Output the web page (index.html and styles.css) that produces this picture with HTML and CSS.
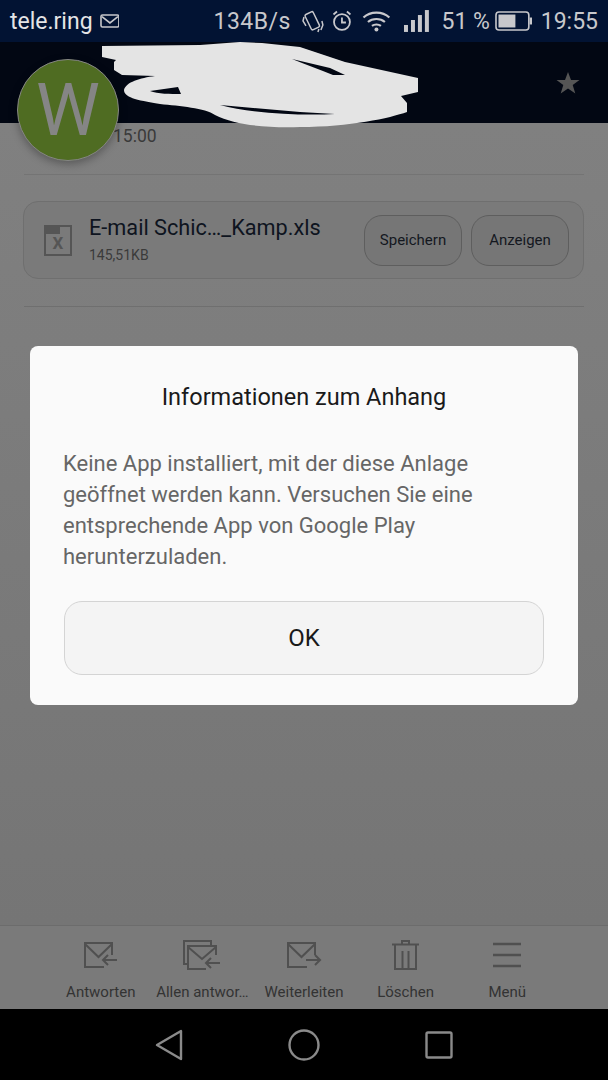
FILE: index.html
```html
<!DOCTYPE html>
<html lang="de">
<head>
	<meta charset="UTF-8">
	<meta name="viewport" content="width=device-width, initial-scale=1.0">
	<title>Informationen zum Anhang</title>
	<link rel="stylesheet" href="styles.css">
</head>
<body>
	<div class="phone">
		<div class="statusbar">
			<span class="carrier">tele.ring</span>
			<svg class="ic-mail" width="20" height="16" viewBox="0 0 20 16" fill="none" stroke="#c8c8cc" stroke-width="1.6"><rect x="1" y="2" width="18" height="12" rx="1.5"/><path d="M2 3.500l8 6.500 8-6.500"/></svg>
			<span class="speed">134B/s</span>
			<svg class="ic-vib" width="22" height="24" viewBox="0 0 22 24" fill="none" stroke="#c8c8cc" stroke-width="1.5"><rect x="6" y="3" width="9" height="17" rx="1.5" transform="rotate(-26 11 12)"/><path d="M2 8l-1 4 3 5M20 12l1 4-2 5M17 20l-1 3"/></svg>
			<svg class="ic-alarm" width="20" height="22" viewBox="0 0 20 22" fill="none" stroke="#c8c8cc" stroke-width="1.8"><circle cx="10" cy="12" r="8"/><path d="M10 7.500v5h4M1.500 4.500l3.500-3M18.500 4.500l-3.500-3"/></svg>
			<svg class="ic-wifi" width="29" height="22" viewBox="0 0 29 22" fill="none" stroke="#c8c8cc" stroke-width="2.200"><path d="M1.500 7.500c7-6.500 19-6.500 26 0M6 12c4.500-4 12.500-4 17 0M10 16c2.500-2 6.500-2 9 0"/><circle cx="14.500" cy="19.500" r="2" fill="#c8c8cc" stroke="none"/></svg>
			<svg class="ic-signal" width="25" height="22" viewBox="0 0 25 22" fill="#c8c8cc"><rect x="0" y="15" width="4" height="7"/><rect x="7" y="10" width="4" height="12"/><rect x="14" y="5" width="4" height="17"/><rect x="21" y="0" width="4" height="22"/></svg>
			<span class="pct">51 %</span>
			<svg class="ic-batt" width="38" height="20" viewBox="0 0 38 20" fill="none"><rect x="1" y="1" width="33" height="18" rx="3" stroke="#c8c8cc" stroke-width="1.600"/><rect x="3.500" y="3.500" width="17" height="13" fill="#c8c8cc"/><path d="M36 6.500v7" stroke="#c8c8cc" stroke-width="2.400"/></svg>
			<span class="clock">19:55</span>
		</div>

		<div class="titlebar">
			<svg class="star" width="24" height="24" viewBox="0 0 24 24" fill="#555"><path d="M12 1l3 8h8.500l-6.800 5 2.600 8.500L12 17.400l-7.300 5.100L7.300 14 .500 9H9z"/></svg>
		</div>

		<div class="content">
			<div class="daterow"><span>15:00</span></div>
			<div class="card">
				<svg class="ic-xls" width="28" height="31" viewBox="0 0 28 31" fill="none"><rect x="1" y="1" width="26" height="29" stroke="#555" stroke-width="2"/><rect x="2" y="2" width="14" height="7" fill="#555"/><text x="14" y="24" class="xls-x">X</text></svg>
				<div class="fileinfo">
					<div class="filename">E-mail Schic…_Kamp.xls</div>
					<div class="filesize">145,51KB</div>
				</div>
				<button class="cardbtn">Speichern</button>
				<button class="cardbtn">Anzeigen</button>
			</div>
			<div class="rule"></div>
		</div>

		<div class="toolbar">
			<div class="tool">
				<svg width="36" height="28" viewBox="0 0 36 28" fill="none" stroke="#505050" stroke-width="2"><path d="M29 14V2H2v24h19M2 3l13.500 13L29 3"/><path d="M34 19H20M25 14l-5 5 5 5"/></svg>
				<span>Antworten</span>
			</div>
			<div class="tool">
				<svg width="38" height="30" viewBox="0 0 38 30" fill="none" stroke="#505050" stroke-width="2"><path d="M5 24H1V1h27v4"/><path d="M33 15V6H5v23h18M5 7l14 12L33 7"/><path d="M37 23H23M28 18l-5 5 5 5"/></svg>
				<span>Allen antwor…</span>
			</div>
			<div class="tool">
				<svg width="36" height="28" viewBox="0 0 36 28" fill="none" stroke="#505050" stroke-width="2"><path d="M29 14V2H2v24h19M2 3l13.500 13L29 3"/><path d="M20 19h14M29 14l5 5-5 5"/></svg>
				<span>Weiterleiten</span>
			</div>
			<div class="tool">
				<svg width="28" height="30" viewBox="0 0 28 30" fill="none" stroke="#505050" stroke-width="2"><path d="M0 4.500h27M10 4V1h7v3M3 5v24h21V5M10.500 11v18M16.500 11v18"/></svg>
				<span>Löschen</span>
			</div>
			<div class="tool">
				<svg width="30" height="26" viewBox="0 0 30 26" fill="none" stroke="#505050" stroke-width="2.600"><path d="M1 2h28M1 13h28M1 24h28"/></svg>
				<span>Menü</span>
			</div>
		</div>

		<div class="navbar">
			<svg width="28" height="32" viewBox="0 0 28 32" fill="none" stroke="#8a8a8a" stroke-width="2.400" stroke-linejoin="round"><path d="M26 2v28L2 16z"/></svg>
			<svg width="32" height="32" viewBox="0 0 32 32" fill="none" stroke="#8a8a8a" stroke-width="2.400"><circle cx="16" cy="16" r="14.500"/></svg>
			<svg width="28" height="28" viewBox="0 0 28 28" fill="none" stroke="#8a8a8a" stroke-width="2.400"><rect x="1.500" y="1.500" width="25" height="25" rx="1.500"/></svg>
		</div>

		<!-- scribble over the sender name -->
		<svg class="scribble" width="320" height="90" viewBox="100 42 320 90">
			<path fill="#e4e4e4" fill-rule="evenodd" d="M102 46L200 45 240 42 262 43 300 47 345 62 418 78V92L401 96 407 103V112C390 118 350 127 300 127 265 128 235 125 215 115 205 108 180 106 160 104 135 100 124 97 124 90 126 82 140 78 155 76L122 75 114 70V62L116 60 102 57Z M150 91L178 87 181 94C170 94 158 94 150 91Z M220 105L300 112 335 114C300 116 250 113 220 105Z M292 59L330 68 345 75 333 75C320 70 305 64 292 59Z"/>
		</svg>

		<div class="avatar">W</div>

		<div class="dialog">
			<h2>Informationen zum Anhang</h2>
			<p>Keine App installiert, mit der diese Anlage geöffnet werden kann. Versuchen Sie eine entsprechende App von Google Play herunterzuladen.</p>
			<button class="okbtn">OK</button>
		</div>
	</div>
</body>
</html>
```

FILE: styles.css
```css
*{
	box-sizing: border-box;
}
html, body{
	margin: 0;
	padding: 0;
}
body{
	font-family: Roboto, "Liberation Sans", sans-serif;
	background: #000;
}
.phone{
	width: 608px;
	height: 1080px;
	position: relative;
	overflow: hidden;
	display: flex;
	flex-direction: column;
}
.statusbar{
	height: 42px;
	background: #021333;
	color: #c8c8cc;
	font-size: 23px;
	display: flex;
	align-items: center;
	padding: 0 10px;
	white-space: nowrap;
}
.carrier{
	color: #e4e4e6;
}
.ic-mail{
	margin-left: 7px;
}
.speed{
	margin-left: 94px;
	letter-spacing: .5px;
}
.ic-vib{
	margin-left: 11px;
}
.ic-alarm{
	margin-left: 8px;
}
.ic-wifi{
	margin-left: 10px;
}
.ic-signal{
	margin-left: 13px;
}
.pct{
	margin-left: 13px;
}
.ic-batt{
	margin-left: 5px;
}
.clock{
	margin-left: 8px;
}
.titlebar{
	height: 81px;
	background: #020713;
	display: flex;
	align-items: center;
	justify-content: flex-end;
	padding-right: 28px;
}
.content{
	flex: 1;
	background: linear-gradient(#808080, #757575);
	padding: 0 24px;
}
.daterow{
	height: 52px;
	border-bottom: 1px solid #747474;
	font-size: 17.500px;
	line-height: 26px;
	color: #3a3a3a;
	padding-left: 89px;
}
.card{
	margin: 26px 0 0 -1px;
	height: 78px;
	border: 1px solid #6f6f6f;
	border-radius: 15px;
	background: #7a7a7a;
	display: flex;
	align-items: center;
	padding: 0 14px 0 20px;
}
.xls-x{
	font-size: 17px;
	font-weight: 700;
	fill: #555;
	text-anchor: middle;
}
.fileinfo{
	margin: -1px 0 0 17px;
	flex: 1;
}
.filename{
	font-size: 21.700px;
	line-height: 26px;
	color: #0e1420;
}
.filesize{
	font-size: 14px;
	line-height: 18px;
	color: #3a3a3a;
	margin-top: 5px;
}
.cardbtn{
	width: 98px;
	height: 51px;
	margin-left: 9px;
	border: 1px solid #5e5e5e;
	border-radius: 18px;
	background: #767676;
	color: #14181f;
	font-family: inherit;
	font-size: 15px;
	padding: 0;
}
.rule{
	height: 1px;
	background: #6f6f6f;
	margin-top: 27px;
}
.toolbar{
	height: 84px;
	background: #7a7a7a;
	border-top: 1px solid #6c6c6c;
	padding: 14px 50px 0;
	display: grid;
	grid-template-columns: repeat(5, 1fr);
}
.tool{
	display: flex;
	flex-direction: column;
	align-items: center;
	font-size: 15px;
	color: #333;
	white-space: nowrap;
}
.tool svg{
	height: 30px;
	margin-bottom: 13px;
}
.navbar{
	height: 71px;
	background: #000;
	padding: 0 155px;
	display: flex;
	align-items: center;
	justify-content: space-between;
}
.scribble{
	position: absolute;
	left: 100px;
	top: 42px;
}
.avatar{
	position: absolute;
	left: 17px;
	top: 59px;
	width: 102px;
	height: 102px;
	border-radius: 50%;
	background: #4f6c22;
	border: 1px solid #858585;
	box-shadow: 0 3px 8px rgba(0,0,0,.3);
	color: #858585;
	font-size: 72px;
	font-weight: 400;
	display: flex;
	align-items: center;
	justify-content: center;
}
.dialog{
	position: absolute;
	left: 30px;
	top: 346px;
	width: 548px;
	height: 359px;
	background: #fafafa;
	border-radius: 8px;
	padding: 0 33px;
}
.dialog h2{
	margin: 36px 0 0;
	font-size: 23.500px;
	line-height: 30px;
	font-weight: 400;
	color: #1a1a1a;
	text-align: center;
}
.dialog p{
	margin: 36px 0 0;
	font-size: 22px;
	line-height: 31px;
	color: #666;
}
.okbtn{
	display: block;
	width: 480px;
	height: 74px;
	margin: 29px 0 0 1px;
	background: #f4f4f4;
	border: 1px solid #d4d4d4;
	border-radius: 18px;
	font-family: inherit;
	font-size: 24px;
	color: #1a1a1a;
	padding: 0;
}
```
